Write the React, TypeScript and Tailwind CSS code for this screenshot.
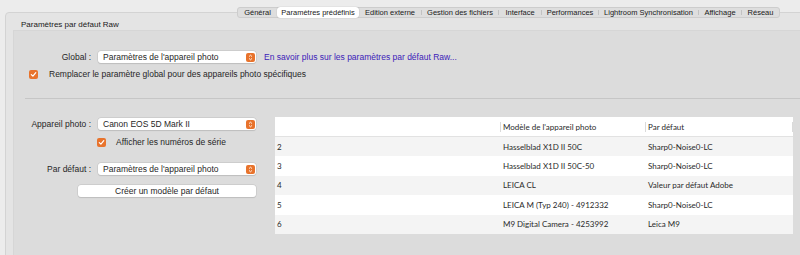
import React from "react";

const tabs = [
  { label: "Général", w: "w-[39px]" },
  { label: "Paramètres prédéfinis", w: "w-[82px]", active: true },
  { label: "Edition externe", w: "w-[62px]" },
  { label: "Gestion des fichiers", w: "w-[76px]" },
  { label: "Interface", w: "w-[42px]" },
  { label: "Performances", w: "w-[56px]" },
  { label: "Lightroom Synchronisation", w: "w-[99px]" },
  { label: "Affichage", w: "w-[42px]" },
  { label: "Réseau", w: "w-[37px]" },
];

const rows = [
  { n: "2", model: "Hasselblad X1D II 50C", def: "Sharp0-Noise0-LC" },
  { n: "3", model: "Hasselblad X1D II 50C-50", def: "Sharp0-Noise0-LC" },
  { n: "4", model: "LEICA CL", def: "Valeur par défaut Adobe" },
  { n: "5", model: "LEICA M (Typ 240) - 4912332", def: "Sharp0-Noise0-LC" },
  { n: "6", model: "M9 Digital Camera - 4253992", def: "Leica M9" },
];

const Stepper = () => (
  <div className="w-[9px] h-[9px] rounded-[2px] bg-[#e8732c] flex items-center justify-center">
    <svg width="5" height="7" viewBox="0 0 5 7">
      <path d="M1 2.6 L2.5 1.2 L4 2.6 M1 4.4 L2.5 5.8 L4 4.4" stroke="white" strokeWidth="0.9" fill="none" />
    </svg>
  </div>
);

const Select = ({ value }: { value: string }) => (
  <div className="w-[158px] h-[12px] rounded-[3px] bg-white shadow-[0_0_0_0.5px_#c2c2c2,0_0.5px_1px_rgba(0,0,0,0.15)] flex items-center justify-between pl-[5px] pr-[1.5px]">
    <span className="text-[8.5px] text-[#1f1f1f] leading-none">{value}</span>
    <Stepper />
  </div>
);

const Check = () => (
  <div className="w-[9px] h-[9px] rounded-[2px] bg-[#e8732c] flex items-center justify-center">
    <svg width="7" height="7" viewBox="0 0 7 7">
      <path d="M1.3 3.6 L2.9 5.2 L5.8 1.6" stroke="white" strokeWidth="1.2" fill="none" strokeLinecap="round" strokeLinejoin="round" />
    </svg>
  </div>
);

export default function App() {
  return (
    <div className="w-[800px] h-[255px] overflow-hidden bg-[#ececec] pt-[12px] pl-[5px] font-['Liberation_Sans',Arial,sans-serif] text-[#262626]">
      <div className="w-[830px] h-[260px] border border-[#d3d3d3] rounded-[4px] bg-[#e4e4e4]">
        {/* tab bar */}
        <div className="-mt-[6px] ml-[231px] flex items-center h-[11px] w-fit rounded-[3px] bg-[#dedede] border border-[#cdcdcd]">
          {tabs.map((t, i) => {
            const prev = tabs[i - 1];
            const sep = i > 0 && !t.active && !prev?.active;
            return (
              <React.Fragment key={t.label}>
                {sep && <div className="w-px h-[5px] bg-[#c2c2c2]" />}
                <div
                  className={
                    t.active
                      ? `${t.w} h-[11px] -my-px bg-white rounded-[3px] shadow-[0_0_1px_rgba(0,0,0,0.35)] flex items-center justify-center text-[7.5px] leading-none text-[#1a1a1a]`
                      : `${t.w} h-[9px] flex items-center justify-center text-[7.5px] leading-none text-[#1a1a1a]`
                  }
                >
                  {t.label}
                </div>
              </React.Fragment>
            );
          })}
        </div>

        <div className="h-[12px] pl-[15px] flex items-end">
          <span className="text-[8px] leading-none pb-[1px] text-[#1a1a1a]">Paramètres par défaut Raw</span>
        </div>

        <div className="ml-[7px] h-[240px] border border-[#d6d6d6] bg-[#dcdcdc]">
          {/* global */}
          <div className="mt-[20px] flex items-center h-[12px]">
            <div className="w-[77px] text-right text-[8.5px] leading-none">Global :</div>
            <div className="ml-[7px]">
              <Select value="Paramètres de l'appareil photo" />
            </div>
            <span className="ml-[8px] text-[8.5px] leading-none text-[#3b21b8]">
              En savoir plus sur les paramètres par défaut Raw...
            </span>
          </div>
          <div className="mt-[7px] flex items-center pl-[15px] h-[9px]">
            <Check />
            <span className="ml-[11px] text-[8.5px] leading-none">
              Remplacer le paramètre global pour des appareils photo spécifiques
            </span>
          </div>

          <div className="mt-[19px] ml-[11px] h-px bg-[#c6c6c6]" />

          {/* camera section */}
          <div className="mt-[18px] flex">
            <div className="w-[242px] flex flex-col">
              <div className="mt-[1px] flex items-center h-[12px]">
                <div className="w-[77px] text-right text-[8.5px] leading-none">Appareil photo :</div>
                <div className="ml-[7px]">
                  <Select value="Canon EOS 5D Mark II" />
                </div>
              </div>
              <div className="mt-[8px] ml-[83px] flex items-center h-[9px]">
                <Check />
                <span className="ml-[10px] text-[8.5px] leading-none">Afficher les numéros de série</span>
              </div>
              <div className="mt-[16px] flex items-center h-[12px]">
                <div className="w-[77px] text-right text-[8.5px] leading-none">Par défaut :</div>
                <div className="ml-[7px]">
                  <Select value="Paramètres de l'appareil photo" />
                </div>
              </div>
              <div className="mt-[10px] ml-[64px] w-[178px] h-[12px] rounded-[3px] bg-white shadow-[0_0_0_0.5px_#c2c2c2,0_0.5px_1px_rgba(0,0,0,0.15)] flex items-center justify-center text-[8.5px] leading-none">
                Créer un modèle par défaut
              </div>
            </div>

            {/* table */}
            <div className="ml-[19px] w-[518px] bg-white font-['Lato',sans-serif] text-[8px] text-[#2a2a2a]">
              <div className="h-[20px] flex items-center border-b border-[#e2e2e2]">
                <div className="w-[225px]" />
                <div className="w-px h-[10px] bg-[#dadada]" />
                <div className="w-[144px] pl-[2px]">Modèle de l'appareil photo</div>
                <div className="w-px h-[10px] bg-[#dadada]" />
                <div className="w-[146px] pl-[2px]">Par défaut</div>
                <div className="w-px h-[10px] bg-[#dadada]" />
              </div>
              {rows.map((r, i) => (
                <div key={r.n} className={`h-[19.4px] flex items-center ${i % 2 === 0 ? "bg-[#f4f4f4]" : "bg-white"}`}>
                  <div className="w-[226px] pl-[2px]">{r.n}</div>
                  <div className="w-[145px] pl-[2px]">{r.model}</div>
                  <div className="pl-[2px]">{r.def}</div>
                </div>
              ))}
            </div>
          </div>
        </div>
      </div>
    </div>
  );
}
